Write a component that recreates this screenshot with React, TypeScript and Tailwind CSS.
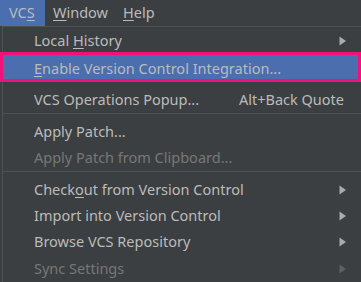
import React from "react"

type Item =
  | { kind: "item"; label: React.ReactNode; h: string; sub?: boolean; disabled?: boolean; shortcut?: string; active?: boolean }
  | { kind: "sep"; cls: string }

const font = { fontFamily: '"Noto Sans", "Noto Sans CJK KR", sans-serif' }

function Arrow({ disabled }: { disabled?: boolean }) {
  return (
    <svg width="8" height="10" viewBox="0 0 8 10" className="shrink-0">
      <polygon points="0.5,0.5 7,5 0.5,9.5" fill={disabled ? "#5f6264" : "#a9abad"} />
    </svg>
  )
}

const items: Item[] = [
  { kind: "item", h: "h-[28px]", sub: true, label: <>Local <u className="underline-offset-2">H</u>istory</> },
  { kind: "item", h: "h-[27px]", active: true, label: <><u className="underline-offset-2">E</u>nable Version Control Integration...</> },
  { kind: "sep", cls: "h-[5px]" },
  { kind: "item", h: "h-[26px]", shortcut: "Alt+Back Quote", label: "VCS Operations Popup..." },
  { kind: "sep", cls: "h-px bg-[#4e5052] mb-[4px]" },
  { kind: "item", h: "h-[27px]", label: "Apply Patch..." },
  { kind: "item", h: "h-[26px]", disabled: true, label: "Apply Patch from Clipboard..." },
  { kind: "sep", cls: "h-px bg-[#4e5052] mb-[4px]" },
  { kind: "item", h: "h-[27px]", sub: true, label: <>Check<u className="underline-offset-2">o</u>ut from Version Control</> },
  { kind: "item", h: "h-[26px]", sub: true, label: "Import into Version Control" },
  { kind: "item", h: "h-[26px]", sub: true, label: "Browse VCS Repository" },
  { kind: "item", h: "h-[27px]", sub: true, disabled: true, label: "Sync Settings" },
]

export default function App() {
  return (
    <div className="relative w-[361px] h-[282px] overflow-hidden bg-[#3c3f41] text-[14.5px] text-[#bbbbbb]" style={font}>
      <div className="flex h-[26px] items-center">
        <div className="flex h-full w-[45px] items-center bg-[#4b6eaf] pl-[9px]">
          VC<u className="underline-offset-2">S</u>
        </div>
        <div className="flex h-full w-[71px] items-center pl-[8px]">
          <u className="underline-offset-2">W</u>indow
        </div>
        <div className="flex h-full items-center pl-[7px]">
          <u className="underline-offset-2">H</u>elp
        </div>
      </div>
      <div className="ml-[2px] flex flex-col border-l border-t border-[#4e5052]">
        {items.map((it, i) =>
          it.kind === "sep" ? (
            <div key={i} className={it.cls} />
          ) : (
            <div
              key={i}
              className={`flex ${it.h} items-center justify-between pl-[31px] ${it.shortcut ? "pr-[17px]" : "pr-[14px]"} ${it.active ? "bg-[#4b6eaf]" : ""} ${it.disabled ? "text-[#777777]" : ""}`}
            >
              <span className="whitespace-nowrap">{it.label}</span>
              {it.shortcut && <span className="whitespace-nowrap">{it.shortcut}</span>}
              {it.sub && <Arrow disabled={it.disabled} />}
            </div>
          )
        )}
      </div>
      {/* annotation box around the highlighted item */}
      <div className="pointer-events-none absolute left-0 right-0 top-[52px] h-[30px] border-[3px] border-[#f0127a]" />
    </div>
  )
}
